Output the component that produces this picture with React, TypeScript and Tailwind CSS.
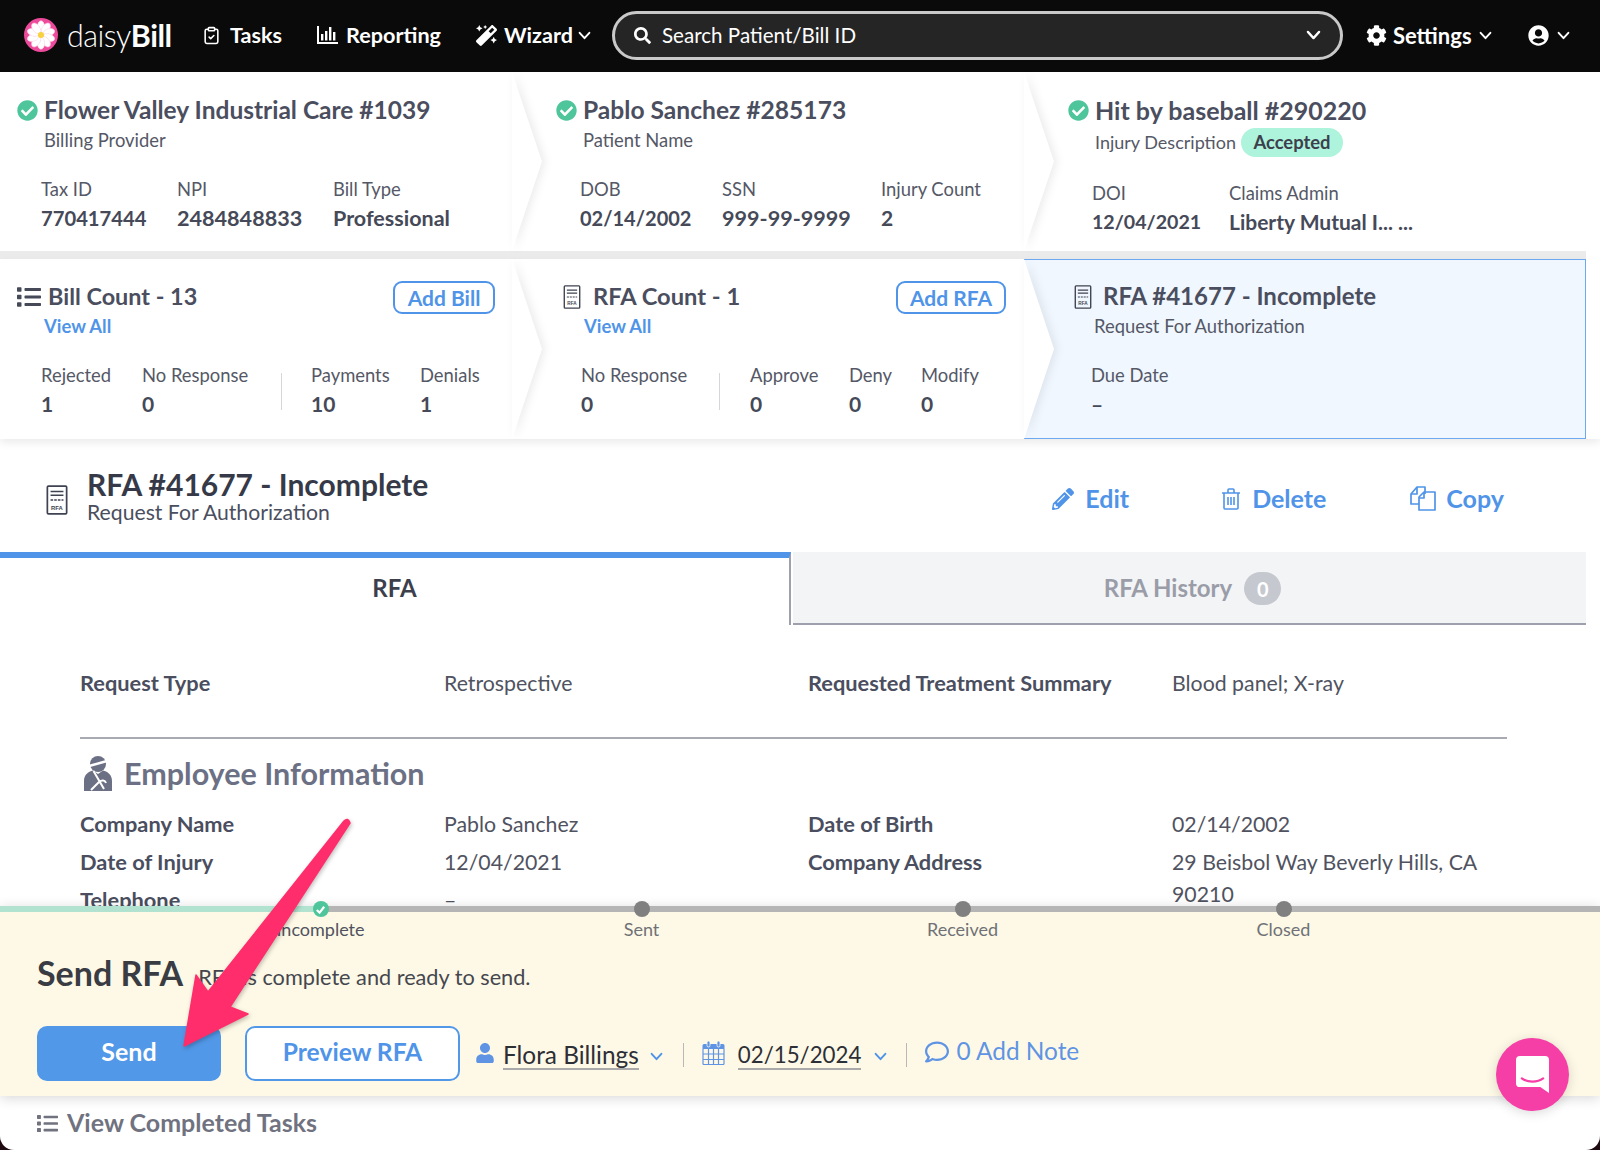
import React from "react";
import { FaCheckCircle, FaCog, FaUserCircle, FaMagic, FaSearch, FaList, FaPencilAlt, FaUser, FaRegComment } from "react-icons/fa";
import { LuClipboardCheck } from "react-icons/lu";

const Chev = ({ className }: { className: string }) => (
  <svg viewBox="0 0 12 8" className={className} fill="none" stroke="currentColor" strokeWidth="1.8" strokeLinecap="round" strokeLinejoin="round"><path d="M1.5 1.5 6 6.5l4.5-5" /></svg>
);

const RfaIcon = ({ className }: { className: string }) => (
  <svg viewBox="0 0 20 28" className={className} fill="none" stroke="#3f4350">
    <rect x="1" y="1" width="18" height="26" strokeWidth="1.6" rx="1" />
    <path d="M4 6h12M4 9.5h12" strokeWidth="1.4" />
    <path d="M4 14h12" strokeWidth="1.4" strokeDasharray="2.4 1" />
    <text x="10" y="23" textAnchor="middle" fontSize="5.5" fill="#3f4350" stroke="none" fontFamily="Liberation Sans" fontWeight="700">RFA</text>
  </svg>
);

const Stat = ({ label, value, w, vc = "text-[21px]" }: { label: string; value: string; w: string; vc?: string }) => (
  <div className={w}>
    <div className="text-[18.4px] leading-[22px] text-[#555866] whitespace-nowrap">{label}</div>
    <div className={`mt-[6px] leading-[24px] font-bold text-[#454958] whitespace-nowrap ${vc}`}>{value}</div>
  </div>
);

const Divider = ({ cls }: { cls: string }) => <div className={`w-px h-[37px] bg-[#d5d6da] self-center mt-[2px] ${cls}`} />;

const Arrow = () => (
  <svg viewBox="0 0 30 180" preserveAspectRatio="none" className="absolute left-full top-0 h-full w-[30px] z-10 drop-shadow-[3px_0_4px_rgba(0,0,0,0.08)]">
    <polygon points="0,0 30,90 0,180" fill="#ffffff" />
  </svg>
);

const Check = () => <FaCheckCircle className="text-[21px] text-[#4fc59b] shrink-0" />;

const Cell = ({ children, arrow = true, cls = "" }: { children: React.ReactNode; arrow?: boolean; cls?: string }) => (
  <div className={`relative h-full ${cls}`}>
    {children}
    {arrow && <Arrow />}
  </div>
);

const Title = ({ children, size }: { children: React.ReactNode; size: string }) => (
  <span className={`leading-[28px] font-bold text-[#4a4e5e] whitespace-nowrap ${size}`}>{children}</span>
);

const Row = ({ label, value }: { label: string; value: string }) => (
  <div className="flex">
    <div className="w-[364px] shrink-0 text-[21.8px] leading-[32px] font-bold text-[#4a4e5e] whitespace-nowrap">{label}</div>
    <div className="w-[335px] text-[21.3px] leading-[32px] text-[#50535f]">{value}</div>
  </div>
);

const Link = ({ children }: { children: React.ReactNode }) => (
  <div className="mt-[3px] text-[18.4px] leading-[24px] font-bold text-[#4f94e8]">{children}</div>
);

export default function App() {
  return (
    <div className="w-[1600px] h-[1150px] bg-[#200a12]" style={{ fontFamily: "Lato, 'Liberation Sans', sans-serif" }}>
      <div className="relative w-full h-full bg-white overflow-hidden flex flex-col rounded-b-[14px]">
        {/* Header */}
        <header className="h-[72px] shrink-0 bg-[#0a0a0a] flex items-center pb-[2px] text-white font-bold text-[21.6px]">
          <svg viewBox="0 0 34 34" className="w-[34px] h-[34px] ml-[24px] shrink-0">
            <circle cx="17" cy="17" r="17" fill="#ee4a9b" />
            {[0, 36, 72, 108, 144, 180, 216, 252, 288, 324].map((a) => (
              <ellipse key={a} cx="17" cy="8.8" rx="3.6" ry="6" fill="#fff" stroke="#fbd3e6" strokeWidth="0.6" transform={`rotate(${a} 17 17)`} />
            ))}
            <circle cx="17" cy="17" r="3" fill="#f7d23c" />
          </svg>
          <div className="ml-[9px] w-[105px] text-[30.5px] leading-[36px] font-light whitespace-nowrap tracking-[-0.5px]">daisy<span className="font-bold">Bill</span></div>
          <LuClipboardCheck className="ml-[30px] text-[19px]" />
          <span className="ml-[9px]">Tasks</span>
          <svg viewBox="0 0 21 18" className="ml-[35px] w-[21px] h-[18px]" fill="#fff"><path d="M0 0h2v16h19v2H0z" /><rect x="4" y="8" width="2.4" height="6.5" /><rect x="8" y="5" width="2.4" height="9.5" /><rect x="12" y="1" width="2.4" height="13.5" /><rect x="16" y="6" width="2.4" height="8.5" /></svg>
          <span className="ml-[8px]">Reporting</span>
          <FaMagic className="ml-[35px] text-[21px]" />
          <span className="ml-[7px]">Wizard</span>
          <Chev className="ml-[5px] w-[13px] h-[9px]" />
          <div className="ml-[21px] w-[731px] h-[49px] rounded-full border-[3px] border-[#c9c9c9] bg-[#252525] flex items-center pl-[19px] pr-[19px] font-normal">
            <FaSearch className="text-[17px]" />
            <span className="ml-[11px] text-[20.6px] whitespace-nowrap">Search Patient/Bill ID</span>
            <Chev className="ml-auto w-[15px] h-[10px]" />
          </div>
          <FaCog className="ml-[23px] text-[21px]" />
          <span className="ml-[6px] text-[22px]">Settings</span>
          <Chev className="ml-[7px] w-[13px] h-[9px]" />
          <FaUserCircle className="ml-[36px] text-[21px]" />
          <Chev className="ml-[8px] w-[13px] h-[9px]" />
        </header>

        {/* Row 1 */}
        <div className="h-[179px] shrink-0 flex pr-[14px] relative">
          <Cell cls="w-[512px] pl-[17px] pt-[24px] z-20">
            <div className="flex items-center gap-[6px]"><Check /><Title size="text-[24.5px]">Flower Valley Industrial Care #1039</Title></div>
            <div className="mt-[4px] ml-[27px] text-[18.4px] leading-[24px] text-[#555866]">Billing Provider</div>
            <div className="mt-[26px] ml-[24px] flex">
              <Stat label="Tax ID" value="770417444" w="w-[136px]" vc="text-[20.2px]" />
              <Stat label="NPI" value="2484848833" w="w-[156px]" vc="text-[21.6px]" />
              <Stat label="Bill Type" value="Professional" w="w-[120px]" vc="text-[21.5px]" />
            </div>
          </Cell>
          <Cell cls="w-[512px] pl-[44px] pt-[24px] z-10">
            <div className="flex items-center gap-[6px]"><Check /><Title size="text-[24.6px]">Pablo Sanchez #285173</Title></div>
            <div className="mt-[4px] ml-[27px] text-[18.4px] leading-[24px] text-[#555866]">Patient Name</div>
            <div className="mt-[26px] ml-[24px] flex">
              <Stat label="DOB" value="02/14/2002" w="w-[142px]" vc="text-[20px]" />
              <Stat label="SSN" value="999-99-9999" w="w-[159px]" vc="text-[21.6px]" />
              <Stat label="Injury Count" value="2" w="w-[110px]" />
            </div>
          </Cell>
          <Cell arrow={false} cls="flex-1 pl-[44px] pt-[24px]">
            <div className="flex items-center gap-[6px]"><Check /><Title size="text-[25px]">Hit by baseball #290220</Title></div>
            <div className="mt-[4px] ml-[27px] flex items-center h-[29px]">
              <span className="text-[18px] leading-[24px] -mt-[1px] text-[#555866]">Injury Description</span>
              <span className="ml-[5px] w-[102px] h-[29px] rounded-full bg-[#aef3dc] text-[#3c3f4c] text-[18.4px] font-bold flex items-center justify-center">Accepted</span>
            </div>
            <div className="mt-[25px] ml-[24px] flex">
              <Stat label="DOI" value="12/04/2021" w="w-[137px]" vc="text-[19.6px]" />
              <Stat label="Claims Admin" value="Liberty Mutual I... ..." w="w-[220px]" />
            </div>
          </Cell>
        </div>
        <div className="h-[8px] shrink-0 mr-[14px] bg-[#ebebeb]" />

        {/* Row 2 */}
        <div className="h-[180px] shrink-0 flex pr-[14px] shadow-[0_4px_8px_rgba(0,0,0,0.08)] relative z-10">
          <Cell cls="w-[512px] pl-[17px] pt-[23px] z-20">
            <div className="flex items-center">
              <FaList className="text-[24px] text-[#454958]" />
              <span className="ml-[7px]"><Title size="text-[23.4px]">Bill Count - 13</Title></span>
              <div className="absolute left-[393px] top-[22px] w-[102px] h-[33px] rounded-[9px] border-2 border-[#4f94e8] bg-white flex items-center justify-center text-[21px] font-bold text-[#4f94e8]">Add Bill</div>
            </div>
            <div className="ml-[27px]"><Link>View All</Link></div>
            <div className="mt-[26px] ml-[24px] flex">
              <Stat label="Rejected" value="1" w="w-[101px]" />
              <Stat label="No Response" value="0" w="w-[139px]" />
              <Divider cls="mr-[29px]" />
              <Stat label="Payments" value="10" w="w-[109px]" />
              <Stat label="Denials" value="1" w="w-[60px]" />
            </div>
          </Cell>
          <Cell cls="w-[512px] pl-[50px] pt-[23px] z-10">
            <div className="flex items-center">
              <RfaIcon className="w-[20px] h-[24px]" />
              <span className="ml-[11px]"><Title size="text-[23.7px]">RFA Count - 1</Title></span>
              <div className="absolute left-[384px] top-[22px] w-[110px] h-[33px] rounded-[9px] border-2 border-[#4f94e8] bg-white flex items-center justify-center text-[21px] font-bold text-[#4f94e8]">Add RFA</div>
            </div>
            <div className="ml-[22px]"><Link>View All</Link></div>
            <div className="mt-[26px] ml-[19px] flex">
              <Stat label="No Response" value="0" w="w-[138px]" />
              <Divider cls="mr-[30px]" />
              <Stat label="Approve" value="0" w="w-[99px]" />
              <Stat label="Deny" value="0" w="w-[72px]" />
              <Stat label="Modify" value="0" w="w-[60px]" />
            </div>
          </Cell>
          <Cell arrow={false} cls="flex-1 pl-[49px] pt-[22px] bg-[#f0f7ff] border border-[#6ea8ee] border-l-0">
            <div className="flex items-center">
              <RfaIcon className="w-[20px] h-[24px]" />
              <span className="ml-[10px]"><Title size="text-[24px]">RFA #41677 - Incomplete</Title></span>
            </div>
            <div className="mt-[3px] ml-[21px] text-[18.4px] leading-[24px] text-[#555866]">Request For Authorization</div>
            <div className="mt-[26px] ml-[18px] flex">
              <Stat label="Due Date" value="–" w="w-[120px]" />
            </div>
          </Cell>
        </div>

        {/* Page title */}
        <div className="h-[113px] shrink-0 flex pr-[96px]">
          <RfaIcon className="ml-[45px] mt-[46px] w-[24px] h-[30px]" />
          <div className="ml-[18px] pt-[27px]">
            <div className="text-[30px] leading-[36px] font-bold text-[#363a48] whitespace-nowrap">RFA #41677 - Incomplete</div>
            <div className="-mt-[2px] text-[21.2px] leading-[24px] text-[#4a4e5e]">Request For Authorization</div>
          </div>
          <div className="ml-auto flex items-center pt-[6px] text-[25px] font-bold text-[#4f94e8]">
            <FaPencilAlt className="text-[22px]" />
            <span className="ml-[11px]">Edit</span>
            <svg viewBox="0 0 20 22" className="ml-[92px] w-[20px] h-[22px]" fill="none" stroke="#4f94e8" strokeWidth="1.6" strokeLinejoin="round">
              <path d="M1 5h18M7 5V2a1 1 0 0 1 1-1h4a1 1 0 0 1 1 1v3M3 5v15a1 1 0 0 0 1 1h12a1 1 0 0 0 1-1V5M7 9v8M10 9v8M13 9v8" />
            </svg>
            <span className="ml-[11px]">Delete</span>
            <svg viewBox="0 0 26 25" className="ml-[84px] w-[26px] h-[25px]" fill="none" stroke="#4f94e8" strokeWidth="1.7" strokeLinejoin="round">
              <path d="M9 18H1V8l6-7h8v7" />
              <path d="M1 8h6V1" />
              <path d="M9 24V11l5-5h11v18z" />
              <path d="M9 12h5V6" />
            </svg>
            <span className="ml-[10px]">Copy</span>
          </div>
        </div>

        {/* Tabs */}
        <div className="h-[73px] shrink-0 flex pr-[14px]">
          <div className="w-[791px] border-t-[6px] border-[#4f94e8] border-r-2 border-r-[#9ea1ad] flex items-center justify-center text-[24px] font-bold text-[#3c3f4c] pb-[8px]">RFA</div>
          <div className="flex-1 ml-[2px] bg-[#f3f4f6] border-b-2 border-[#9ea1ad] flex items-center justify-center text-[24px] font-bold text-[#9a9da8] pl-[6px]">
            <span>RFA History</span>
            <span className="ml-[12px] mt-[2px] w-[37px] h-[33px] rounded-full bg-[#c6c8d0] text-white text-[20px] flex items-center justify-center">0</span>
          </div>
        </div>

        {/* Content */}
        <div className="flex-1 min-h-0 overflow-hidden px-[80px] pt-[42px]">
          <div className="flex">
            <div className="w-[728px]"><Row label="Request Type" value="Retrospective" /></div>
            <Row label="Requested Treatment Summary" value="Blood panel; X-ray" />
          </div>
          <div className="mt-[38px] w-[1427px] h-[1.5px] bg-[#a9abb3]" />
          <div className="mt-[16px] flex items-center h-[38px]">
            <svg viewBox="0 0 28 35" className="ml-[4px] w-[28px] h-[35px]" fill="#6c7084">
              <circle cx="14" cy="8" r="8" />
              <path d="M5 10 23 5" stroke="#fff" strokeWidth="2.4" fill="none" />
              <path d="M0 35V25C0 19 4 15.500 9 14.500L14 18l5-3.500C24 15.500 28 19 28 25v10z" />
              <path d="M9.500 15 20 33M7 34l8-8c3-2.500 6-2 7 1" stroke="#fff" strokeWidth="2" fill="none" />
            </svg>
            <span className="ml-[12px] text-[30.5px] font-bold text-[#6c7084] whitespace-nowrap">Employee Information</span>
          </div>
          <div className="mt-[15px] flex">
            <div className="w-[728px] flex flex-col gap-[6px]">
              <Row label="Company Name" value="Pablo Sanchez" />
              <Row label="Date of Injury" value="12/04/2021" />
              <Row label="Telephone" value="–" />
            </div>
            <div className="flex flex-col gap-[6px]">
              <Row label="Date of Birth" value="02/14/2002" />
              <Row label="Company Address" value="29 Beisbol Way Beverly Hills, CA 90210" />
            </div>
          </div>
        </div>

        {/* Bottom panel */}
        <div className="h-[190px] shrink-0 bg-[#fef9e6] relative z-20 shadow-[0_2px_12px_rgba(0,0,0,0.16)] px-[37px]">
          <div className="absolute left-0 top-0 w-full h-[6px] bg-[#b5b5b5]" />
          <div className="absolute left-0 top-0 w-[320px] h-[6px] bg-[#b2e3d0]" />
          <div className="absolute left-[160px] top-[-5px] grid grid-cols-[321px_321px_321px_321px] text-[18px] text-[#6f7177]">
            {["Incomplete", "Sent", "Received", "Closed"].map((s, i) => (
              <div key={s} className="flex flex-col items-center">
                {i === 0 ? (
                  <div className="w-[16px] h-[16px] rounded-full bg-[#4fc59b] flex items-center justify-center">
                    <svg viewBox="0 0 12 12" className="w-[11px] h-[11px]" fill="none" stroke="#fff" strokeWidth="2.4"><path d="M2 6.500 5 9.500 10 3" /></svg>
                  </div>
                ) : (
                  <div className="w-[16px] h-[16px] rounded-full bg-[#808080]" />
                )}
                <div className={`leading-[24px] ${i === 0 ? "text-[#50535f]" : ""}`}>{s}</div>
              </div>
            ))}
          </div>
          <div className="pt-[47px] flex items-baseline">
            <span className="text-[34px] leading-[40px] font-bold text-[#3a3c44]">Send RFA</span>
            <span className="ml-[15px] -translate-y-[1px] text-[21.7px] text-[#45474f]">RFA is complete and ready to send.</span>
          </div>
          <div className="mt-[31px] flex items-center">
            <div className="w-[184px] h-[55px] rounded-[10px] bg-[#5298e8] text-white text-[25px] font-bold flex items-center justify-center pb-[2px]">Send</div>
            <div className="ml-[24px] w-[215px] h-[55px] rounded-[10px] border-2 border-[#5298e8] bg-white text-[#4f94e8] text-[24.6px] font-bold flex items-center justify-center pb-[2px]">Preview RFA</div>
            <FaUser className="ml-[15px] text-[20px] text-[#5f94e4]" />
            <span className="ml-[8px] mt-[5px] text-[24.4px] text-[#2d2f36] border-b-2 border-[#aaa] leading-[26px]">Flora Billings</span>
            <Chev className="ml-[11px] mt-[6px] w-[13px] h-[9px] text-[#4f94e8]" />
            <div className="ml-[20px] w-px h-[24px] bg-[#b8b8b8] mt-[3px]" />
            <svg viewBox="0 0 23 24" className="ml-[18px] w-[23px] h-[24px]">
              <path d="M2 3h19a1.500 1.500 0 0 1 1.500 1.500V8H.5V4.500A1.500 1.500 0 0 1 2 3z" fill="#5f94e4" />
              <rect x="5" y="0" width="3" height="6" rx="1.500" fill="#5f94e4" stroke="#fef9e6" strokeWidth="0.8" />
              <rect x="15" y="0" width="3" height="6" rx="1.500" fill="#5f94e4" stroke="#fef9e6" strokeWidth="0.8" />
              <path d="M1 8v14.500a1 1 0 0 0 1 1h19a1 1 0 0 0 1-1V8M1 13h21M1 18.500h21M6.500 8v15M11.500 8v15M16.500 8v15" fill="none" stroke="#5f94e4" strokeWidth="1.200" />
            </svg>
            <span className="ml-[13px] mt-[5px] text-[22.3px] text-[#2d2f36] border-b-2 border-[#aaa] leading-[26px]">02/15/2024</span>
            <Chev className="ml-[13px] mt-[6px] w-[13px] h-[9px] text-[#4f94e8]" />
            <div className="ml-[19px] w-px h-[24px] bg-[#b8b8b8] mt-[3px]" />
            <FaRegComment className="ml-[18px] -mt-[3px] text-[24px] text-[#5f94e4]" />
            <span className="ml-[7px] -mt-[4px] text-[24.4px] text-[#5f94e4]">0 Add Note</span>
          </div>
        </div>

        {/* Footer */}
        <div className="h-[54px] shrink-0 flex items-center pl-[37px] text-[#70737f] font-bold text-[25px]">
          <FaList className="text-[21px]" />
          <span className="ml-[9px]">View Completed Tasks</span>
        </div>

        {/* Chat bubble */}
        <div className="absolute left-[1496px] top-[1038px] z-30 w-[73px] h-[73px] rounded-full bg-[#f53fa6] shadow-[0_2px_12px_rgba(0,0,0,0.15)] flex items-center justify-center">
          <svg viewBox="0 0 34 38" className="w-[33px] h-[37px]">
            <path d="M4 0h26a4 4 0 0 1 4 4v34l-9-6H4a4 4 0 0 1-4-4V4a4 4 0 0 1 4-4z" fill="#fff" />
            <path d="M6 23c6 4.500 16 4.500 22 0" fill="none" stroke="#f53fa6" strokeWidth="2.200" strokeLinecap="round" />
          </svg>
        </div>

        {/* Annotation arrow */}
        <svg className="absolute left-0 top-0 z-40 pointer-events-none drop-shadow-[1px_2px_2px_rgba(0,0,0,0.25)]" width="400" height="1100" viewBox="0 0 400 1100">
          <path d="M344 821 Q348 817 350 823 L230 1007 L248 1014 L184 1046 L196 975 L208 992 Z" fill="#ff2d6b" stroke="#ff2d6b" strokeWidth="1.500" strokeLinejoin="round" />
        </svg>
      </div>
    </div>
  );
}
